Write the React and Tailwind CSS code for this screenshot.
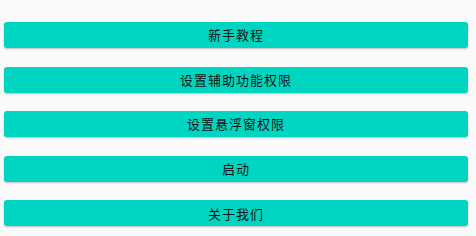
import React from 'react';

const items = ['新手教程', '设置辅助功能权限', '设置悬浮窗权限', '启动', '关于我们'];

const App = () => {
  return (
    <div className="w-[476px] h-[236px] bg-[#fafafa] overflow-hidden">
      <div className="flex flex-col gap-[18.6px] pt-[22px] pl-[4px]">
        {items.map((label) => (
          <button
            key={label}
            className="w-[464px] h-[26px] rounded-[3px] bg-[#00d5c1] shadow-[0_1px_2px_rgba(0,0,0,0.25)] flex items-center justify-center text-[13px] tracking-[1px] text-[#161616] font-['Noto_Sans_CJK_SC','Noto_Sans',sans-serif]"
          >
            {label}
          </button>
        ))}
      </div>
    </div>
  );
};

export default App;
